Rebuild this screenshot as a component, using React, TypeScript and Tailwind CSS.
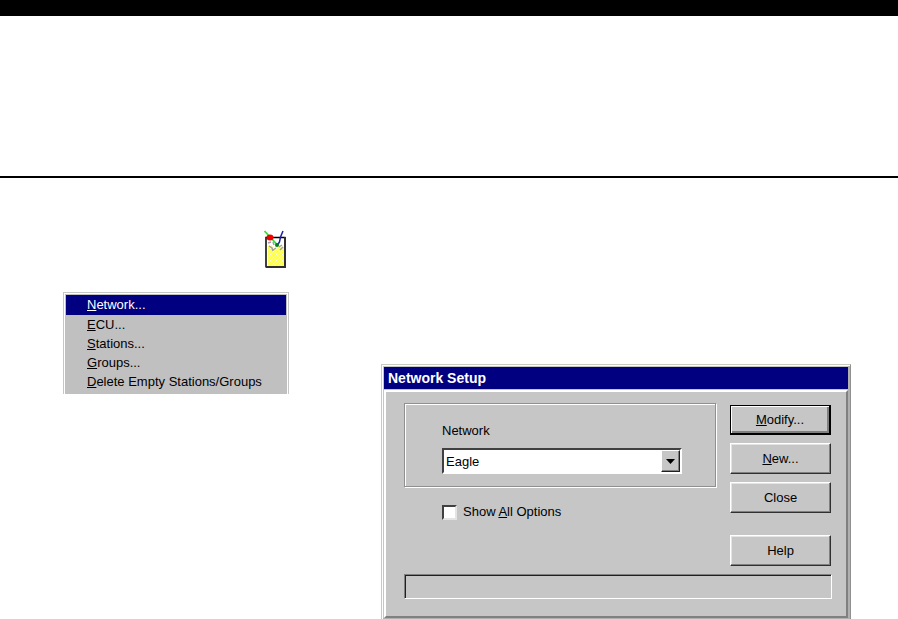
import { clsx } from "clsx";
import type { ReactNode } from "react";

const menuItems = [
	{ key: "N", rest: "etwork..." },
	{ key: "E", rest: "CU..." },
	{ key: "S", rest: "tations..." },
	{ key: "G", rest: "roups..." },
	{ key: "D", rest: "elete Empty Stations/Groups" },
];

function DrinkIcon() {
	return (
		<svg width="24" height="40" viewBox="0 0 24 40" aria-hidden="true">
			<defs>
				<pattern id="juice" width="3" height="3" patternUnits="userSpaceOnUse">
					<rect width="3" height="3" fill="#ffff4a" />
					<rect width="1" height="1" fill="#fffff0" />
					<rect x="1.500" y="1.500" width="1" height="1" fill="#ffffc0" />
				</pattern>
			</defs>
			<rect x="3" y="8" width="18" height="29" fill="#fff" />
			<path d="M4 16l3-1 4 4 3-3 6 1v19H4z" fill="url(#juice)" />
			<path
				d="M4 13l3-1M5 16l3 2 1 3M9 20l3-2M15 17l3-2M16 20l3-3M9 12l1 3"
				fill="none"
				stroke="#a0a0a0"
				strokeWidth="1.500"
			/>
			<path d="M2 37.500V7.500H21.500" fill="none" stroke="#000" strokeWidth="1.500" />
			<path d="M21 7v30H2" fill="none" stroke="#303030" strokeWidth="2" />
			<path d="M0.500 1l13 14" stroke="#30e030" strokeWidth="1.700" />
			<path d="M19 1l-2.500 6-1 5-2 3" fill="none" stroke="#2020a0" strokeWidth="1.500" />
			<ellipse cx="6" cy="7.500" rx="3.500" ry="3" fill="#f00000" />
			<circle cx="13" cy="15" r="2" fill="#008020" />
		</svg>
	);
}

function DialogButton({
	children,
	isDefault = false,
}: {
	children: ReactNode;
	isDefault?: boolean;
}) {
	return (
		<button
			type="button"
			className={clsx(
				"w-full bg-[#c6c6c6] text-[13px] leading-4",
				isDefault
					? "h-[30px] border border-r-2 border-b-2 border-black shadow-[inset_1px_1px_#fff,inset_-2px_-2px_#808080]"
					: "h-[31px] border border-t-white border-r-[#303030] border-b-[#303030] border-l-white shadow-[inset_-1px_-1px_#808080,inset_1px_1px_#e4e4e4]",
			)}
		>
			{children}
		</button>
	);
}

function PopupMenu() {
	return (
		<div
			role="menu"
			className="w-[226px] border-t border-r border-l border-[#c6c6c6] bg-[#c0c0c0] pb-[3px] shadow-[inset_1px_1px_#fff,inset_-1px_0_#fff]"
		>
			<div className="px-[2px] pt-[2px]">
				{menuItems.map((item, i) => (
					<button
						key={item.key}
						type="button"
						role="menuitem"
						className={clsx(
							"block w-full pl-[21px] text-left text-[13px] leading-[20px] whitespace-nowrap",
							i === 0 ? "bg-[#000080] text-white" : "h-[19px] text-black",
						)}
					>
						<u>{item.key}</u>
						{item.rest}
					</button>
				))}
			</div>
		</div>
	);
}

function NetworkDialog() {
	return (
		<section
			role="dialog"
			aria-labelledby="dialog-title"
			className="border border-t-[#c8ccc0] border-r-[#909090] border-b-[#505050] border-l-[#c8c8c8] bg-[#c6c6c6] p-[2px] shadow-[inset_1px_1px_#fff,inset_-2px_-2px_#b0b0b0]"
		>
			<h1
				id="dialog-title"
				className="mb-px h-[22px] bg-[#000080] pl-1 text-[14px] leading-[22px] font-bold text-white"
			>
				Network Setup
			</h1>
			<div className="border-2 border-t-white border-r-[#808080] border-b-[#808080] border-l-white pt-[11px] pr-[15px] pb-[17px] pl-[18px]">
				<div className="flex gap-[14px]">
					<div className="flex-1">
						<div className="h-[84px] border border-[#909090] pr-[33px] pl-[37px] shadow-[inset_1px_1px_#fff,1px_1px_#fff]">
							<label htmlFor="network" className="block pt-[19px] text-[13px] leading-4">
								Network
							</label>
							<div className="relative mt-[9px]">
								<select
									id="network"
									className="h-[26px] w-full appearance-none border-2 border-t-[#404040] border-r-white border-b-white border-l-[#404040] bg-white pt-px pl-[2px] text-[13px] leading-4"
								>
									<option>Eagle</option>
								</select>
								<span className="pointer-events-none absolute top-[2px] right-[2px] flex h-[22px] w-[19px] items-center justify-center border border-t-white border-r-[#202020] border-b-[#202020] border-l-white bg-[#c6c6c6] shadow-[inset_-1px_-1px_#808080]">
									<svg width="9" height="5" viewBox="0 0 9 5" aria-hidden="true">
										<path d="M0 0h9L4.500 5z" />
									</svg>
								</span>
							</div>
						</div>
						<label className="mt-[16px] ml-[38px] flex items-center gap-[6px] text-[13px] leading-[18px]">
							<input
								type="checkbox"
								className="size-[15px] appearance-none border-2 border-t-[#404040] border-r-[#e4e4e4] border-b-[#e4e4e4] border-l-[#404040] bg-white"
							/>
							<span>
								Show <u>A</u>ll Options
							</span>
						</label>
					</div>
					<div className="flex w-[101px] flex-col gap-2 pt-[2px]">
						<DialogButton isDefault>
							<u>M</u>odify...
						</DialogButton>
						<DialogButton>
							<u>N</u>ew...
						</DialogButton>
						<DialogButton>Close</DialogButton>
						<div className="pt-[14px]">
							<DialogButton>Help</DialogButton>
						</div>
					</div>
				</div>
				<div
					role="status"
					className="mt-2 -mr-px h-[25px] border border-t-[#808080] border-r-white border-b-white border-l-[#808080] shadow-[inset_1px_1px_#202020]"
				/>
			</div>
		</section>
	);
}

export default function App() {
	return (
		<main className="bg-white font-['Liberation_Sans',Arial,sans-serif] text-black">
			<div className="h-4 bg-black" />
			<div className="h-[162px] border-b-2 border-black" />
			<div className="flex items-start justify-between pr-[47px] pl-[63px]">
				<div className="pt-[52px]">
					<div className="flex justify-end pr-[1px]">
						<DrinkIcon />
					</div>
					<div className="pt-[22px]">
						<PopupMenu />
					</div>
				</div>
				<div className="ml-[92px] flex-1 pt-[186px]">
					<NetworkDialog />
				</div>
			</div>
		</main>
	);
}
